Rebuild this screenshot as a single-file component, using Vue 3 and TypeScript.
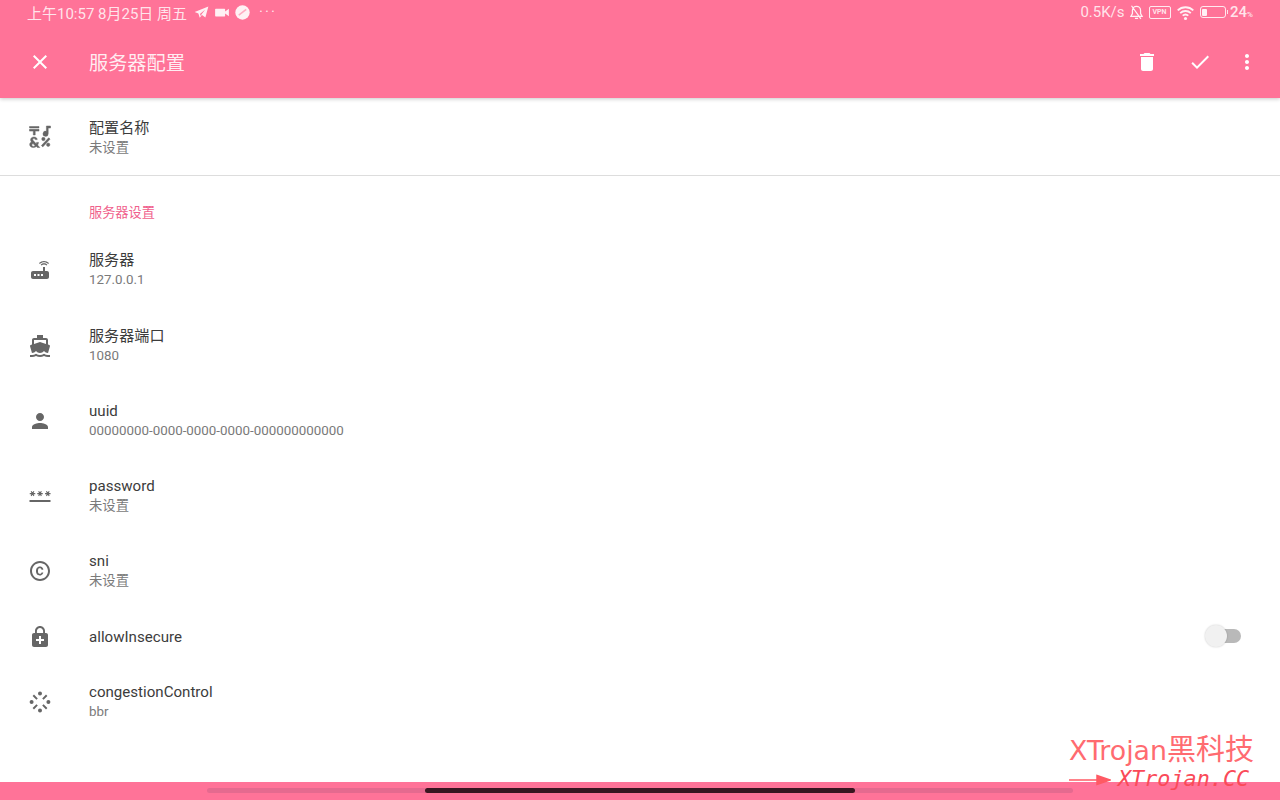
<script setup lang="ts">
interface Row { icon: string; title: string; sub?: string; cls: string; toggle?: boolean }
const star = (cx: number, cy: number): string =>
  `M${cx - 2.75} ${cy - 0.55}h5.5v1.1h-5.5z` +
  `M${cx - 0.9} ${cy - 2.6}l2.75 4.6l-.95 .55l-2.75 -4.6z` +
  `M${cx + 0.9} ${cy - 2.6}l.95 .55l-2.75 4.6l-.95 -.55z`
const icons: Record<string, string> = {
  router: 'M20.2 5.9l.8-.8C19.6 3.7 17.8 3 16 3s-3.6.7-5 2.1l.8.8C13 4.8 14.5 4.2 16 4.2s3 .6 4.2 1.7zm-.9.8c-.9-.9-2.1-1.4-3.3-1.4s-2.4.5-3.3 1.4l.8.8c.7-.7 1.6-1 2.5-1 .9 0 1.8.3 2.5 1l.8-.8zM19 13h-2V9h-2v4H5c-1.1 0-2 .9-2 2v4c0 1.1.9 2 2 2h14c1.1 0 2-.9 2-2v-4c0-1.1-.9-2-2-2zM8 18H6v-2h2v2zm3.5 0h-2v-2h2v2zm3.5 0h-2v-2h2v2z',
  boat: 'M20 21c-1.39 0-2.78-.47-4-1.32-2.44 1.71-5.56 1.71-8 0C6.78 20.53 5.39 21 4 21H2v2h2c1.38 0 2.74-.35 4-.99 2.52 1.29 5.48 1.29 8 0 1.26.65 2.62.99 4 .99h2v-2h-2zM3.95 19H4c1.6 0 3.02-.88 4-2 .98 1.12 2.4 2 4 2s3.02-.88 4-2c.98 1.12 2.4 2 4 2h.05l1.89-6.68c.08-.26.06-.54-.06-.78s-.34-.42-.6-.5L20 10.62V6c0-1.1-.9-2-2-2h-3V1H9v3H6c-1.1 0-2 .9-2 2v4.62l-1.29.42c-.26.08-.48.26-.6.5s-.15.52-.06.78L3.95 19zM6 6h12v3.97L12 8 6 9.97V6z',
  person: 'M12 12c2.21 0 4-1.79 4-4s-1.79-4-4-4-4 1.79-4 4 1.79 4 4 4zm0 2c-2.67 0-8 1.34-8 4v2h16v-2c0-2.66-5.33-4-8-4z',
  password: `M1.500 16h21v1.900h-21z${star(4.5, 9.6)}${star(12, 9.6)}${star(19.8, 9.6)}`,
  copyright: 'M10.08 10.86c.05-.33.16-.62.3-.87s.34-.46.59-.62c.24-.15.54-.22.91-.23.23.01.44.05.63.13.2.09.38.21.52.36s.25.33.34.53.13.42.14.64h1.79c-.02-.47-.11-.9-.28-1.29s-.4-.73-.7-1.01-.66-.5-1.08-.66-.88-.23-1.39-.23c-.65 0-1.22.11-1.7.34s-.88.53-1.2.92-.56.84-.71 1.36S8 11.29 8 11.87v.27c0 .58.08 1.12.23 1.64s.39.97.71 1.35.72.69 1.2.91 1.05.34 1.7.34c.47 0 .91-.08 1.32-.23s.77-.36 1.08-.63.56-.58.74-.94.29-.74.3-1.15h-1.79c-.01.21-.06.4-.15.58s-.21.33-.36.46-.32.23-.52.3c-.19.07-.39.09-.6.1-.36-.01-.66-.08-.89-.23-.25-.16-.45-.37-.59-.62s-.25-.55-.3-.88-.08-.67-.08-1v-.27c0-.35.03-.68.08-1.01zM12 2C6.48 2 2 6.48 2 12s4.48 10 10 10 10-4.48 10-10S17.52 2 12 2zm0 18c-4.41 0-8-3.59-8-8s3.59-8 8-8 8 3.59 8 8-3.59 8-8 8z',
  lock: 'M18 8h-1V6c0-2.76-2.24-5-5-5S7 3.24 7 6v2H6c-1.1 0-2 .9-2 2v10c0 1.1.9 2 2 2h12c1.1 0 2-.9 2-2V10c0-1.1-.9-2-2-2zM8.9 6c0-1.71 1.39-3.1 3.1-3.1s3.1 1.39 3.1 3.1v2H8.9V6zM16 16h-3v3h-2v-3H8v-2h3v-3h2v3h3v2z',
  spokes: 'M12 1.600a2 2 0 1 0 0 4 2 2 0 0 0 0-4zM12 18.400a2 2 0 1 0 0 4 2 2 0 0 0 0-4zM3.600 10a2 2 0 1 0 0 4 2 2 0 0 0 0-4zM20.400 10a2 2 0 1 0 0 4 2 2 0 0 0 0-4zM6 4.600L4.600 6l3.800 3.800 1.400-1.400zM18 4.600l-3.800 3.800 1.400 1.400L19.400 6zM8.400 14.200L4.600 18 6 19.400l3.800-3.800zM15.600 14.200l-1.400 1.400 3.800 3.800 1.400-1.400z',
  symbols: 'M1.500 1.500h9.500v1.400H1.500zM1.500 4.300h9.500v1.800H7.200V10H5.300V6.100H1.500zM18.400 1v5.300a2.600 2.600 0 1 0 1.800 2.500V3h2.300V1zM13.400 20.600l7.300-7.800 1.400 1.300-7.300 7.800zM15.400 12.300a1.700 1.700 0 1 0 0 3.400 1.700 1.700 0 0 0 0-3.400zM20.200 18a1.700 1.700 0 1 0 0 3.400 1.700 1.700 0 0 0 0-3.400zM6 12c-1.900 0-3.400 1.100-3.400 2.800 0 .9.300 1.500.8 2.100-1 .5-1.700 1.400-1.700 2.500C1.700 21.200 3.200 22.500 5.300 22.500c1.200 0 2.300-.4 3.100-1.100l1 1.100h2.400l-2.200-2.400c.5-.8.8-1.700.9-2.700H8.600c-.1.500-.2 1-.4 1.400l-2.500-2.700c-.4-.4-1-.9-1-1.500 0-.6.6-1 1.300-1 .7 0 1.200.4 1.300 1h1.900C9.200 13.100 7.900 12 6 12zM4.900 18.500c.1 0 .2.100.2.100l2 2.200c-.5.400-1.100.600-1.700.600-1 0-1.600-.6-1.600-1.400 0-.6.400-1.100 1.100-1.500z'
}
const closeIcon = 'M19 6.41L17.59 5 12 10.59 6.41 5 5 6.41 10.59 12 5 17.59 6.41 19 12 13.41 17.59 19 19 17.59 13.41 12z'
const deleteIcon = 'M6 19c0 1.1.9 2 2 2h8c1.1 0 2-.9 2-2V7H6v12zM19 4h-3.5l-1-1h-5l-1 1H5v2h14V4z'
const checkIcon = 'M9 16.17L4.83 12l-1.42 1.41L9 19 21 7l-1.41-1.41z'
const moreIcon = 'M12 8c1.1 0 2-.9 2-2s-.9-2-2-2-2 .9-2 2 .9 2 2 2zm0 2c-1.1 0-2 .9-2 2s.9 2 2 2 2-.9 2-2-.9-2-2-2zm0 6c-1.1 0-2 .9-2 2s.9 2 2 2 2-.9 2-2-.9-2-2-2z'
const rows: Row[] = [
  { icon: 'router', title: '服务器', sub: '127.0.0.1', cls: 'tall' },
  { icon: 'boat', title: '服务器端口', sub: '1080', cls: 'tall' },
  { icon: 'person', title: 'uuid', sub: '00000000-0000-0000-0000-000000000000', cls: 'mid' },
  { icon: 'password', title: 'password', sub: '未设置', cls: 'mid' },
  { icon: 'copyright', title: 'sni', sub: '未设置', cls: 'tall' },
  { icon: 'lock', title: 'allowInsecure', cls: 'short', toggle: true },
  { icon: 'spokes', title: 'congestionControl', sub: 'bbr', cls: 'mid' }
]
</script>

<template>
  <div class="page">
    <header class="appbar">
      <div class="status">
        <div class="status-left">
          <span>上午10:57 8月25日 周五</span>
          <svg class="si plane" viewBox="0 0 24 24"><path d="M23 2.500 1 11.200l6 2.300 2.200 7 3.600-4.400 5.400 4 4.800-17.600zM9.500 14.200l8.500-7.200-6.200 8.200-.6 2.600z" /></svg>
          <svg class="si cam" viewBox="0 0 24 24"><path d="M17 10.500V6.800c0-.6-.4-1-1-1H2c-.6 0-1 .4-1 1v10.400c0 .6.400 1 1 1h14c.6 0 1-.4 1-1v-3.700l6 4.500V6z" /></svg>
          <svg class="si disc" viewBox="0 0 24 24"><circle cx="12" cy="12" r="11.500" /><path d="M6 16 18 7" stroke="#ff7398" stroke-width="2.500" fill="none" opacity=".55" /></svg>
          <span class="dots">···</span>
        </div>
        <div class="status-right">
          <span>0.5K/s</span>
          <svg class="si bell" viewBox="0 0 24 24"><path d="M12 3a6.500 6.500 0 0 0-6.500 6.500v5L3 19h18l-2.500-4.500v-5A6.500 6.500 0 0 0 12 3zM9.500 22h5M4 2l15 21" fill="none" stroke="#fff" stroke-width="2" /></svg>
          <span class="vpn">VPN</span>
          <svg class="si wifi" viewBox="0 0 24 24"><path d="M1 9a16 16 0 0 1 22 0M4.500 12.800a11 11 0 0 1 15 0M8 16.500a6 6 0 0 1 8 0" fill="none" stroke="#fff" stroke-width="2.600" /><circle cx="12" cy="20.500" r="2.200" /></svg>
          <span class="battery"><span class="level"></span></span>
          <span class="nub"></span>
          <span class="pct">24<small>%</small></span>
        </div>
      </div>
      <div class="toolbar">
        <svg class="tool close" viewBox="0 0 24 24"><path :d="closeIcon" /></svg>
        <h1>服务器配置</h1>
        <svg class="tool" viewBox="0 0 24 24"><path :d="deleteIcon" /></svg>
        <svg class="tool" viewBox="0 0 24 24"><path :d="checkIcon" /></svg>
        <svg class="tool" viewBox="0 0 24 24"><path :d="moreIcon" /></svg>
      </div>
    </header>

    <main class="list">
      <div class="row first">
        <svg class="icon bold" viewBox="0 0 24 24"><path :d="icons.symbols" /></svg>
        <div class="text">
          <div class="title">配置名称</div>
          <div class="sub">未设置</div>
        </div>
      </div>
      <div class="section">服务器设置</div>
      <div v-for="r in rows" :key="r.title" class="row" :class="r.cls">
        <svg class="icon" viewBox="0 0 24 24"><path :d="icons[r.icon]" /></svg>
        <div class="text">
          <div class="title">{{ r.title }}</div>
          <div v-if="r.sub" class="sub">{{ r.sub }}</div>
        </div>
        <div v-if="r.toggle" class="switch"><span class="thumb"></span></div>
      </div>
    </main>

    <footer class="navbar">
      <div class="track"><span class="handle"></span></div>
    </footer>

    <div class="watermark">
      <div class="wm-top">XTrojan<span class="wm-cjk">黑科技</span></div>
      <div class="wm-bottom">
        <svg class="arrow" viewBox="0 0 42 12"><path d="M0 6h34M28 1.500 41 6 28 10.500z" stroke="#ff5a64" stroke-width="1.500" fill="#ff5a64" /></svg>
        <span>XTrojan.CC</span>
      </div>
    </div>
  </div>
</template>

<style>
html, body { margin: 0; background: #fff; }
</style>

<style scoped>
.page {
  position: relative;
  width: 1280px;
  height: 800px;
  display: flex;
  flex-direction: column;
  overflow: hidden;
  background: #fff;
  font-family: Roboto, "Noto Sans CJK SC", sans-serif;
}
.appbar {
  height: 98px;
  flex: none;
  background: #ff7398;
  color: #fff;
  box-shadow: 0 1px 4px rgba(0, 0, 0, .22);
  z-index: 1;
}
.status {
  height: 26px;
  box-sizing: border-box;
  display: flex;
  justify-content: space-between;
  align-items: center;
  padding: 0 27px 2px 27px;
  font-size: 15px;
  color: rgba(255, 255, 255, .82);
}
.status-left, .status-right { display: flex; align-items: center; }
.si { fill: #fff; opacity: .9; flex: none; }
.plane { width: 15px; height: 15px; margin-left: 7px; }
.cam { width: 16px; height: 15px; margin-left: 5px; }
.disc { width: 15px; height: 15px; margin-left: 5px; }
.dots { margin-left: 9px; letter-spacing: 2px; }
.bell { width: 15px; height: 16px; margin-left: 4px; }
.vpn {
  margin-left: 5px;
  box-sizing: border-box;
  width: 22px;
  height: 13px;
  border: 1.500px solid rgba(255, 255, 255, .85);
  border-radius: 2px;
  font-size: 7px;
  font-weight: 700;
  line-height: 10px;
  text-align: center;
}
.wifi { width: 19px; height: 17px; margin-left: 5px; }
.battery {
  margin-left: 5px;
  width: 26px;
  height: 12px;
  box-sizing: border-box;
  border: 1.500px solid rgba(255, 255, 255, .85);
  border-radius: 3px;
  padding: 1.500px;
  display: flex;
}
.nub { width: 1.500px; height: 4px; margin-left: 1px; background: rgba(255, 255, 255, .8); }
.level { width: 5px; background: rgba(255, 255, 255, .9); border-radius: 1px; }
.pct { margin-left: 2px; font-weight: 500; }
.pct small { font-size: 8px; }
.toolbar {
  height: 72px;
  display: flex;
  align-items: center;
  padding: 0 21px 0 28px;
  box-sizing: border-box;
}
.tool { width: 24px; height: 24px; fill: #fff; flex: none; margin-left: 29px; }
.tool.close { margin-left: 0; }
.tool:last-child { margin-left: 23px; }
.toolbar h1 {
  flex: 1;
  margin: 0 0 0 37px;
  font-size: 19.200px;
  font-weight: 400;
  color: rgba(255, 255, 255, .88);
}
.list { flex: 1; min-height: 0; }
.row {
  display: flex;
  align-items: center;
  padding: 0 28px;
  box-sizing: border-box;
}
.row.first { height: 78px; border-bottom: 1px solid #ddd; padding-top: 3px; }
.row.tall { height: 76px; }
.row.mid { height: 74.600px; }
.row.short { height: 56px; padding-bottom: 1px; }
.icon { width: 24px; height: 24px; fill: #666; flex: none; }
.icon.bold { stroke: #666; stroke-width: .5px; margin-top: -3px; }
.text { margin-left: 37px; flex: 1; }
.title { font-size: 15.100px; line-height: 20px; color: #3c3c3c; }
.sub { font-size: 13.350px; line-height: 20px; color: #7a7a7a; }
.section {
  height: 56px;
  box-sizing: border-box;
  padding: 27px 0 0 89px;
  font-size: 13.200px;
  line-height: 20px;
  color: #f0608c;
}
.switch {
  position: relative;
  width: 36px;
  height: 14px;
  margin-right: 11px;
  margin-top: -1px;
}
.switch::before {
  content: "";
  position: absolute;
  left: 10px;
  right: 0;
  top: 0;
  height: 14px;
  border-radius: 7px;
  background: #b9b9b9;
}
.thumb {
  position: absolute;
  left: 0;
  top: -4px;
  width: 22px;
  height: 22px;
  border-radius: 50%;
  background: #f1f1f1;
  box-shadow: 0 0 2px rgba(0, 0, 0, .22);
}
.navbar {
  height: 18px;
  flex: none;
  background: #ff7398;
  display: flex;
  justify-content: center;
  align-items: flex-start;
  padding-top: 6px;
  box-sizing: border-box;
}
.track {
  width: 866px;
  height: 5px;
  border-radius: 3px;
  background: #e56a8f;
  display: flex;
  justify-content: center;
}
.handle {
  width: 430px;
  height: 5px;
  border-radius: 3px;
  background: #3a1520;
}
.watermark {
  position: absolute;
  left: 1069px;
  top: 733px;
  width: 210px;
  z-index: 2;
}
.wm-top {
  height: 32px;
  font-family: "DejaVu Sans", "Noto Sans CJK SC", sans-serif;
  font-size: 26.800px;
  line-height: 32px;
  color: #ff6b70;
  white-space: nowrap;
}
.wm-cjk { font-size: 29px; line-height: 1; font-family: "Noto Sans CJK SC", sans-serif; }
.wm-bottom {
  display: flex;
  align-items: center;
  font-family: "DejaVu Sans Mono", monospace;
  font-style: italic;
  font-size: 21.800px;
  line-height: 28px;
  color: #fa4a58;
}
.arrow { width: 42px; height: 12px; flex: none; margin-right: 7px; margin-top: 2px; }
</style>
